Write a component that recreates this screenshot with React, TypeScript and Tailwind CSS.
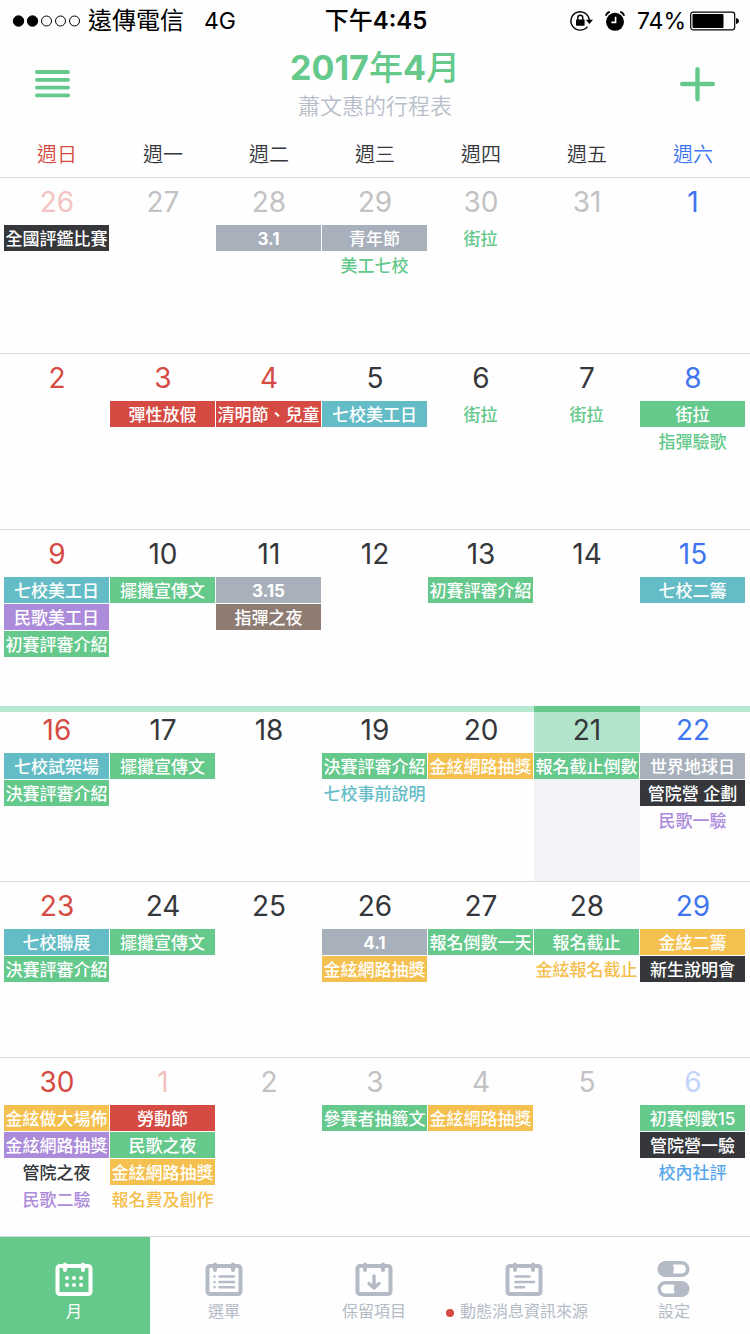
import React from "react";

type Tone =
  | "dark" | "gray" | "red" | "teal" | "green" | "purple" | "brown" | "yellow"
  | "textGreen" | "textTeal" | "textPurple" | "textYellow" | "textDark" | "textBlue";

type Entry = [string, Tone];
type Day = { n: number; events?: Entry[]; holiday?: boolean; muted?: boolean; today?: boolean };

const tones: Record<Tone, string> = {
  dark: "bg-[#35373b] text-white",
  gray: "bg-[#a8b0bb] text-white",
  red: "bg-[#d54a42] text-white",
  teal: "bg-[#64bdc6] text-white",
  green: "bg-[#65c98c] text-white",
  purple: "bg-[#ac8bda] text-white",
  brown: "bg-[#8e7c73] text-white",
  yellow: "bg-[#f4c04f] text-white",
  textGreen: "text-[#65c98c]",
  textTeal: "text-[#64bdc6]",
  textPurple: "text-[#ac8bda]",
  textYellow: "text-[#f4c04f]",
  textDark: "text-[#35373b]",
  textBlue: "text-[#58a6ec]",
};

const weekdays = ["週日", "週一", "週二", "週三", "週四", "週五", "週六"];

const weeks: Day[][] = [
  [
    { n: 26, muted: true, events: [["全國評鑑比賽", "dark"]] },
    { n: 27, muted: true },
    { n: 28, muted: true, events: [["3.1", "gray"]] },
    { n: 29, muted: true, events: [["青年節", "gray"], ["美工七校", "textGreen"]] },
    { n: 30, muted: true, events: [["街拉", "textGreen"]] },
    { n: 31, muted: true },
    { n: 1 },
  ],
  [
    { n: 2 },
    { n: 3, holiday: true, events: [["彈性放假", "red"]] },
    { n: 4, holiday: true, events: [["清明節、兒童", "red"]] },
    { n: 5, events: [["七校美工日", "teal"]] },
    { n: 6, events: [["街拉", "textGreen"]] },
    { n: 7, events: [["街拉", "textGreen"]] },
    { n: 8, events: [["街拉", "green"], ["指彈驗歌", "textGreen"]] },
  ],
  [
    { n: 9, events: [["七校美工日", "teal"], ["民歌美工日", "purple"], ["初賽評審介紹", "green"]] },
    { n: 10, events: [["擺攤宣傳文", "green"]] },
    { n: 11, events: [["3.15", "gray"], ["指彈之夜", "brown"]] },
    { n: 12 },
    { n: 13, events: [["初賽評審介紹", "green"]] },
    { n: 14 },
    { n: 15, events: [["七校二籌", "teal"]] },
  ],
  [
    { n: 16, events: [["七校試架場", "teal"], ["決賽評審介紹", "green"]] },
    { n: 17, events: [["擺攤宣傳文", "green"]] },
    { n: 18 },
    { n: 19, events: [["決賽評審介紹", "green"], ["七校事前說明", "textTeal"]] },
    { n: 20, events: [["金絃網路抽獎", "yellow"]] },
    { n: 21, today: true, events: [["報名截止倒數", "green"]] },
    { n: 22, events: [["世界地球日", "gray"], ["管院營 企劃", "dark"], ["民歌一驗", "textPurple"]] },
  ],
  [
    { n: 23, events: [["七校聯展", "teal"], ["決賽評審介紹", "green"]] },
    { n: 24, events: [["擺攤宣傳文", "green"]] },
    { n: 25 },
    { n: 26, events: [["4.1", "gray"], ["金絃網路抽獎", "yellow"]] },
    { n: 27, events: [["報名倒數一天", "green"]] },
    { n: 28, events: [["報名截止", "green"], ["金絃報名截止", "textYellow"]] },
    { n: 29, events: [["金絃二籌", "yellow"], ["新生說明會", "dark"]] },
  ],
  [
    { n: 30, events: [["金絃做大場佈", "yellow"], ["金絃網路抽獎", "purple"], ["管院之夜", "textDark"], ["民歌二驗", "textPurple"]] },
    { n: 1, muted: true, holiday: true, events: [["勞動節", "red"], ["民歌之夜", "green"], ["金絃網路抽獎", "yellow"], ["報名費及創作", "textYellow"]] },
    { n: 2, muted: true },
    { n: 3, muted: true, events: [["參賽者抽籤文", "green"]] },
    { n: 4, muted: true, events: [["金絃網路抽獎", "yellow"]] },
    { n: 5, muted: true },
    { n: 6, muted: true, events: [["初賽倒數15", "green"], ["管院營一驗", "dark"], ["校內社評", "textBlue"]] },
  ],
];

function dayColor(day: Day, column: number) {
  if (column === 0 || day.holiday) return day.muted ? "text-[#f3c3c2]" : "text-[#d54a42]";
  if (column === 6) return day.muted ? "text-[#c3d4fb]" : "text-[#4075f0]";
  return day.muted ? "text-[#c2c2c4]" : "text-[#35373b]";
}

function weekdayColor(column: number) {
  if (column === 0) return "text-[#d54a42]";
  if (column === 6) return "text-[#4075f0]";
  return "text-[#35373b]";
}

function StatusBar() {
  return (
    <div className="grid h-[42px] grid-cols-[1fr_auto_1fr] items-center pl-3 pr-2.5 text-2xl text-black">
      <div className="flex items-center">
        <svg className="mr-1.5 h-3.5 w-[70px]" viewBox="0 0 70 14" fill="none" stroke="#000" strokeWidth="1">
          <circle cx="6.5" cy="7" r="5.2" fill="#000" />
          <circle cx="20.5" cy="7" r="5.2" fill="#000" />
          <circle cx="34.5" cy="7" r="5" />
          <circle cx="48.5" cy="7" r="5" />
          <circle cx="62.5" cy="7" r="5" />
        </svg>
        <span>遠傳電信</span>
        <span className="ml-5 text-[23px]">4G</span>
      </div>
      <time>
        <span className="font-medium">下午</span>
        <span className="font-semibold">4:45</span>
      </time>
      <div className="flex items-center justify-end">
        <svg className="mr-3 h-6 w-6" viewBox="0 0 24 24" fill="none" stroke="#000" strokeWidth="1.4">
          <path d="M18.4 17.6A9.2 9.2 0 1 1 20.3 11" />
          <path d="M16.8 10.800h7.200l-3.600 4.200z" fill="#000" stroke="none" />
          <rect x="7" y="10.5" width="8.600" height="6.200" rx="0.6" fill="#000" stroke="none" />
          <path d="M8.800 11V8.700a2.500 2.500 0 0 1 5 0V11" />
        </svg>
        <svg className="mr-3 h-5 w-5" viewBox="0 0 20 20" fill="none" stroke="#000">
          <circle cx="10" cy="10.800" r="9" fill="#000" stroke="none" />
          <path d="M.8 4.800C1.400 2.800 2.800 1.400 4.800 .9M19.200 4.800C18.600 2.800 17.200 1.400 15.200 .9" strokeWidth="1.700" />
          <path d="M10.600 5.800v5.600H6.400" stroke="#fff" strokeWidth="1.600" />
        </svg>
        <span className="mr-1 text-[23px]">74%</span>
        <svg className="h-5 w-[50px]" viewBox="0 0 50 20" fill="none">
          <rect x="0.7" y="1.2" width="44" height="17.6" rx="2.5" stroke="#000" strokeWidth="1.2" />
          <rect x="2.5" y="3" width="31" height="14" rx="1" fill="#000" />
          <path d="M46 7c2 .6 3 1.600 3 3s-1 2.400-3 3z" fill="#000" />
        </svg>
      </div>
    </div>
  );
}

function DayCell({ day, column }: { day: Day; column: number }) {
  const today = day.today;
  return (
    <td
      className={
        today
          ? "relative min-w-0 bg-[#f1f3f6] before:absolute before:inset-x-0 before:top-0 before:h-1.5 before:bg-[#65c98c]"
          : "min-w-0"
      }
    >
      <div className={today ? "border-b border-white bg-[#b1e4cb]" : "border-b border-transparent"}>
        <div className={`h-[46px] text-center text-[28px] leading-[48px] ${dayColor(day, column)}`}>{day.n}</div>
      </div>
      {day.events && (
        <ul className="flex flex-col gap-px pr-px">
          {day.events.map(([label, tone], i) => (
            <li
              key={i}
              className={`h-[26px] overflow-hidden whitespace-nowrap text-center text-[17px] leading-[28px] ${tones[tone]} ${/^[\d.]+$/.test(label) ? "font-bold" : "font-medium"}`}
            >
              {label}
            </li>
          ))}
        </ul>
      )}
    </td>
  );
}

function CalendarIcon({ children }: { children: React.ReactNode }) {
  return (
    <svg className="h-9 w-[38px]" viewBox="0 0 38 36" fill="none" stroke="currentColor" strokeLinecap="round">
      <rect x="2.5" y="5" width="33" height="28" rx="2.5" strokeWidth="4" />
      <path d="M10 3.500v5.500M28 3.500v5.500" strokeWidth="4" />
      {children}
    </svg>
  );
}

const tabs = [
  {
    label: "月",
    icon: (
      <CalendarIcon>
        <path d="M12 17h.01M19 17h.01M26 17h.01M12 24h.01M19 24h.01M26 24h.01" strokeWidth="4" />
      </CalendarIcon>
    ),
  },
  {
    label: "選單",
    icon: (
      <CalendarIcon>
        <path d="M9.5 15.5h.01M9.5 21h.01M9.5 26.3h.01M14.5 15.5h14.5M14.5 21h14.5M14.5 26.3h14.5" strokeWidth="2.5" />
      </CalendarIcon>
    ),
  },
  {
    label: "保留項目",
    icon: (
      <CalendarIcon>
        <path d="M19 15v12M14 22.5l5 4.5 5-4.5" strokeWidth="3.4" strokeLinejoin="round" />
      </CalendarIcon>
    ),
  },
  {
    label: "動態消息資訊來源",
    dot: true,
    icon: (
      <CalendarIcon>
        <path d="M10.5 15.5h14M10.5 21h18.5M10.5 26.3h8.5" strokeWidth="2.6" />
      </CalendarIcon>
    ),
  },
  {
    label: "設定",
    icon: (
      <svg className="h-9 w-[38px]" viewBox="0 0 38 36" fill="currentColor">
        <path
          fillRule="evenodd"
          d="M10.500 0h16a8 8 0 0 1 0 16h-16a8 8 0 0 1 0-16ZM18 3.500q1.500 4.500 0 9h8.500a4.500 4.500 0 0 0 0-9Z"
        />
        <path
          fillRule="evenodd"
          d="M10.500 20h16a8 8 0 0 1 0 16h-16a8 8 0 0 1 0-16ZM10.500 23.500a4.500 4.500 0 0 0 0 9H19.500q-1.500-4.500 0-9Z"
        />
      </svg>
    ),
  },
];

export default function App() {
  const [active, setActive] = React.useState(0);
  return (
    <div className="flex min-h-screen flex-col bg-[#fefefe] font-['Inter','Noto_Sans_CJK_TC',sans-serif]">
      <StatusBar />
      <header className="flex h-[84px] items-center justify-between px-[35px]">
        <button type="button" aria-label="選單" className="text-[#65c98c]">
          <svg className="h-7 w-[35px]" viewBox="0 0 35 28" stroke="currentColor" strokeWidth="3.8" strokeLinecap="round">
            <path d="M1.900 2h31.200M1.900 9.800h31.200M1.900 17.600h31.200M1.900 25.400h31.200" />
          </svg>
        </button>
        <div className="text-center">
          <h1 className="text-[34px] font-bold leading-[44px] text-[#65c98c]">
            2017<span className="font-medium">年</span>4<span className="font-medium">月</span>
          </h1>
          <p className="text-[22px] font-[350] leading-8 text-[#b8bfca]">蕭文惠的行程表</p>
        </div>
        <button type="button" aria-label="新增" className="text-[#65c98c]">
          <svg className="h-[35px] w-[35px]" viewBox="0 0 35 35" stroke="currentColor" strokeWidth="4.4" strokeLinecap="round">
            <path d="M2.200 17h30.600M17.500 2.200v30" />
          </svg>
        </button>
      </header>
      <table className="flex flex-1 flex-col">
        <thead className="block">
          <tr className="grid h-[51px] grid-cols-7 px-1">
            {weekdays.map((name, i) => (
              <th key={name} scope="col" className={`pt-1 text-xl font-[350] leading-[50px] ${weekdayColor(i)}`}>
                {name}
              </th>
            ))}
          </tr>
        </thead>
        <tbody className="flex flex-1 flex-col">
          {weeks.map((week, w) => (
            <tr
              key={w}
              className={`grid min-h-44 grid-cols-7 border-t px-1 last:flex-1 ${
                week.some((d) => d.today)
                  ? "relative border-transparent before:absolute before:inset-x-0 before:top-0 before:h-1.5 before:bg-[#b9e8d1]"
                  : "border-[#d9dadc]"
              }`}
            >
              {week.map((day, i) => (
                <DayCell key={i} day={day} column={i} />
              ))}
            </tr>
          ))}
        </tbody>
      </table>
      <nav className="grid grid-cols-5 border-t border-[#d3d8da]">
        {tabs.map((tab, i) => (
          <button
            key={tab.label}
            type="button"
            onClick={() => setActive(i)}
            className={`flex h-[97px] flex-col items-center pr-0.5 pt-6 ${
              i === active ? "bg-[#65c98c] text-white" : "text-[#b4bbc6]"
            }`}
          >
            {tab.icon}
            <span className="relative whitespace-nowrap text-base leading-7">
              {tab.dot && <i className="absolute -left-3.5 top-3 h-2 w-2 rounded-full bg-[#d54a42]" />}
              {tab.label}
            </span>
          </button>
        ))}
      </nav>
    </div>
  );
}
